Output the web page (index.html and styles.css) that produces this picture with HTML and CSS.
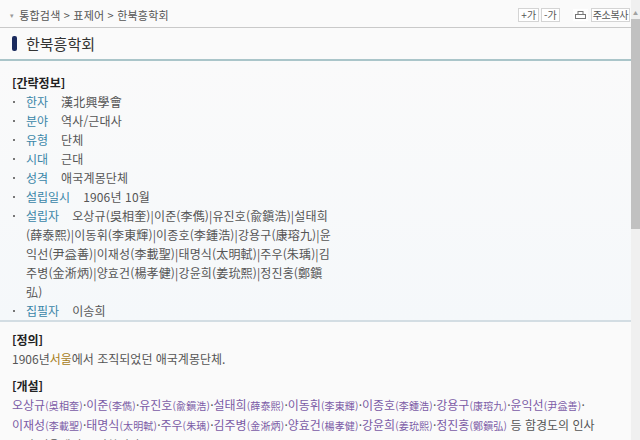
FILE: index.html
```html
<!DOCTYPE html>
<html lang="ko">

<head>
    <meta charset="UTF-8">
    <title>한북흥학회</title>
    <link rel="stylesheet" href="styles.css">
</head>

<body>
    <div class="frame">
        <div class="page">
            <div class="topbar">
                <div class="crumbs"><span class="mark">&#9662;</span>통합검색 &gt; 표제어 &gt; 한북흥학회</div>
                <div class="tools">
                    <span class="tool">+가</span>
                    <span class="tool">-가</span>
                    <span class="tool icon">
                        <svg width="11" height="8" viewBox="0 0 11 8">
                            <rect x="3" y="0.5" width="5" height="3" fill="none" stroke="#777" />
                            <rect x="0.5" y="3.5" width="10" height="4" fill="none" stroke="#777" />
                        </svg>
                    </span>
                    <span class="tool copy">주소복사</span>
                </div>
            </div>

            <h1 class="title"><span class="bar"></span>한북흥학회</h1>

            <div class="summary">
                <h2 class="head">[간략정보]</h2>
                <ul class="facts">
                    <li><span class="label">한자</span><span class="value">漢北興學會</span></li>
                    <li><span class="label">분야</span><span class="value">역사/근대사</span></li>
                    <li><span class="label">유형</span><span class="value">단체</span></li>
                    <li><span class="label">시대</span><span class="value">근대</span></li>
                    <li><span class="label">성격</span><span class="value">애국계몽단체</span></li>
                    <li><span class="label">설립일시</span><span class="value">1906년 10월</span></li>
                    <li><span class="label">설립자</span><span class="value">오상규(吳相奎)|이준(李儁)|유진호(兪鎭浩)|설태희<br>(薛泰熙)|이동휘(李東輝)|이종호(李鍾浩)|강용구(康瑢九)|윤<br>익선(尹益善)|이재성(李載聖)|태명식(太明軾)|주우(朱瑀)|김<br>주병(金淅炳)|양효건(楊孝健)|강윤희(姜玧熙)|정진홍(鄭鎭<br>弘)</span></li>
                    <li><span class="label">집필자</span><span class="value">이송희</span></li>
                </ul>
            </div>

            <div class="section">
                <h2 class="head">[정의]</h2>
                <p class="text">1906년<span class="place">서울</span>에서 조직되었던 애국계몽단체.</p>
            </div>

            <div class="section">
                <h2 class="head">[개설]</h2>
                <p class="text">
                    <span class="name">오상규<small>(吳相奎)</small></span>·<span class="name">이준<small>(李儁)</small></span>·<span class="name">유진호<small>(兪鎭浩)</small></span>·<span class="name">설태희<small>(薛泰熙)</small></span>·<span class="name">이동휘<small>(李東輝)</small></span>·<span class="name">이종호<small>(李鍾浩)</small></span>·<span class="name">강용구<small>(康瑢九)</small></span>·<span class="name">윤익선<small>(尹益善)</small></span>·<br>
                    <span class="name">이재성<small>(李載聖)</small></span>·<span class="name">태명식<small>(太明軾)</small></span>·<span class="name">주우<small>(朱瑀)</small></span>·<span class="name">김주병<small>(金淅炳)</small></span>·<span class="name">양효건<small>(楊孝健)</small></span>·<span class="name">강윤희<small>(姜玧熙)</small></span>·<span class="name">정진홍<small>(鄭鎭弘)</small></span> 등 함경도의 인사<br>
                    들이 서울에서 조직하였다.
                </p>
            </div>
        </div>

        <div class="scrollbar">
            <div class="arrow">&#9650;</div>
            <div class="thumb"></div>
        </div>
    </div>
</body>

</html>
```

FILE: styles.css
```css
body {
    margin: 0;
    background: #fafafa;
    font-family: 'Noto Sans CJK KR', 'Noto Sans', sans-serif;
    font-size: 12px;
    color: #444;
    overflow: hidden;
}

.frame {
    display: flex;
    height: 440px;
}

.page {
    flex: 1;
    min-width: 0;
}

.topbar {
    display: flex;
    justify-content: space-between;
    align-items: center;
    height: 28px;
    padding: 0 1px 0 10px;
    border-bottom: 1px solid #c9c9c9;
    box-sizing: border-box;
}

.crumbs {
    font-size: 11px;
    color: #555;
    padding-top: 2px;
    letter-spacing: 0.2px;
}

.mark {
    font-size: 7px;
    color: #999;
    margin-right: 5px;
    vertical-align: 2px;
}

.tools {
    display: flex;
    gap: 2px;
    padding-top: 3px;
}

.tool {
    display: flex;
    align-items: center;
    height: 12px;
    padding: 0 2px;
    border: 1px solid #d4d4d4;
    background: #fff;
    font-size: 10px;
    line-height: 12px;
    color: #555;
}

.tool.icon {
    margin-left: 10px;
    border-color: #fafafa;
    padding: 0 2px;
}

.tool.copy {
    padding: 0 1px;
    letter-spacing: -0.4px;
}

.title {
    display: flex;
    align-items: center;
    gap: 9px;
    margin: 0;
    height: 31px;
    padding: 0 0 0 12px;
    font-size: 15px;
    font-weight: normal;
    color: #333;
    border-bottom: 2px solid #aac5c9;
}

.bar {
    width: 5px;
    height: 15px;
    border-radius: 2px;
    background: #1b2b5e;
}

.summary {
    background: linear-gradient(#fafafa, #f5f8fa);
    padding: 12px 0 0 12px;
    border-bottom: 2px solid #d3dde3;
}

.head {
    margin: 0;
    font-size: 12px;
    font-weight: bold;
    color: #222;
    line-height: 19px;
}

.facts {
    list-style: none;
    margin: 0;
    padding: 0;
}

.facts li {
    position: relative;
    padding-left: 14px;
    line-height: 19px;
    white-space: nowrap;
}

.facts li::before {
    content: "";
    position: absolute;
    left: 1px;
    top: 9px;
    width: 2px;
    height: 2px;
    background: #777;
}

.label {
    color: #3a86a8;
    margin-right: 13px;
}

.value {
    color: #555;
    letter-spacing: 0.15px;
}

.section {
    padding: 8px 0 0 10px;
}

.section .head {
    padding-left: 2px;
}

.text {
    margin: 0;
    padding-left: 2px;
    line-height: 19px;
    color: #555;
    white-space: nowrap;
}

.place {
    color: #a8801a;
}

.name {
    color: #7b5aa6;
}

.name small {
    font-size: 10px;
    letter-spacing: 0.2px;
}

.scrollbar {
    width: 9px;
    background: #f0f0f0;
    display: flex;
    flex-direction: column;
}

.arrow {
    height: 19px;
    font-size: 5px;
    color: #a0a0a0;
    text-align: center;
    line-height: 26px;
}

.thumb {
    height: 210px;
    background: #c1c1c1;
}
```
